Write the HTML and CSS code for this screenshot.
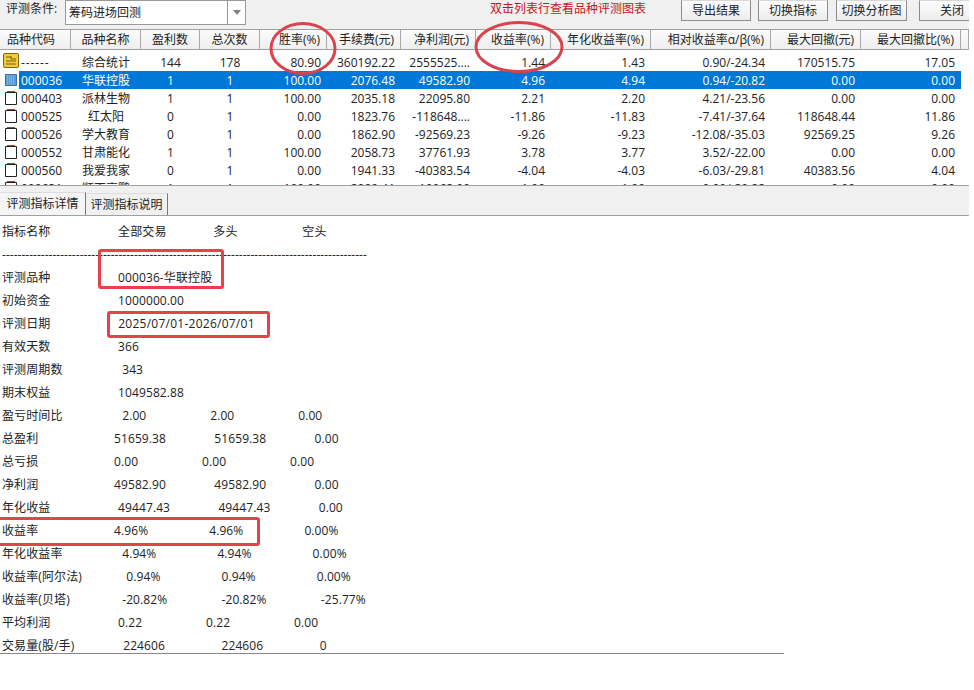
FILE: index.html
```html
<!DOCTYPE html>
<html>

<head>
  <title>评测结果</title>
  <meta charset="UTF-8">
  <link rel="stylesheet" href="styles.css">
</head>

<body>
  <div class="window">

    <div class="toolbar">
      <span class="cond_label">评测条件:</span>
      <div class="combo">
        <span class="combo_text">筹码进场回测</span>
        <span class="combo_btn"><svg width="8" height="5" viewBox="0 0 8 5"><path d="M0 0H8L4 5Z" fill="#808080"/></svg></span>
      </div>
      <span class="hint">双击列表行查看品种评测图表</span>
      <button class="btn">导出结果</button>
      <button class="btn btn_gap">切换指标</button>
      <button class="btn btn_wide">切换分析图</button>
      <button class="btn btn_close">关闭</button>
    </div>

    <div class="list">
      <div class="row head">
        <div class="code">品种代码</div><div class="name">品种名称</div><div class="mid">盈利数</div><div class="mid">总次数</div><div>胜率(%)</div><div>手续费(元)</div><div>净利润(元)</div><div>收益率(%)</div><div>年化收益率(%)</div><div>相对收益率α/β(%)</div><div>最大回撤(元)</div><div>最大回撤比(%)</div><div></div>
      </div>
      <div class="rows">
        <div class="row">
          <div class="code"><svg class="ico" width="16" height="16" viewBox="0 0 16 16"><rect x="0.5" y="0.5" width="15" height="14" rx="1.5" fill="#f2cc3a" stroke="#7d6410"/><path d="M3 4H8M8 3V6H13M3 8H13M3 11H13" fill="none" stroke="#7a5f10"/></svg><span class="dash_code">------</span></div>
          <div class="name">综合统计</div><div class="mid">144</div><div class="mid">178</div><div>80.90</div><div>360192.22</div><div>2555525....</div><div>1.44</div><div>1.43</div><div>0.90/-24.34</div><div>170515.75</div><div>17.05</div>
        </div>
        <div class="row selected">
          <div class="code"><svg class="ico" width="16" height="16" viewBox="0 0 16 16"><path d="M2.5 3.5H13.5V14.5H2.5Z" fill="#5b9bd5" stroke="#41719c"/><path d="M4 5H12M4 7H12M4 9H12M4 11H12M4 13H12" stroke="#a9cbea" stroke-dasharray="1 1"/></svg><span class="sel_text">000036</span></div>
          <div class="name sel_text">华联控股</div><div class="mid sel_text">1</div><div class="mid sel_text">1</div><div class="sel_text">100.00</div><div class="sel_text">2076.48</div><div class="sel_text">49582.90</div><div class="sel_text">4.96</div><div class="sel_text">4.94</div><div class="sel_text">0.94/-20.82</div><div class="sel_text">0.00</div><div class="sel_text">0.00</div>
        </div>
        <div class="row">
          <div class="code"><svg class="ico" width="16" height="16" viewBox="0 0 16 16"><path d="M2.5 3.5H13.5V15.5H2.5Z" fill="#fff" stroke="#222"/><path d="M4 2.5H12" stroke="#b04040"/></svg>000403</div>
          <div class="name">派林生物</div><div class="mid">1</div><div class="mid">1</div><div>100.00</div><div>2035.18</div><div>22095.80</div><div>2.21</div><div>2.20</div><div>4.21/-23.56</div><div>0.00</div><div>0.00</div>
        </div>
        <div class="row">
          <div class="code"><svg class="ico" width="16" height="16" viewBox="0 0 16 16"><path d="M2.5 3.5H13.5V15.5H2.5Z" fill="#fff" stroke="#222"/><path d="M4 2.5H12" stroke="#b04040"/></svg>000525</div>
          <div class="name">红太阳</div><div class="mid">0</div><div class="mid">1</div><div>0.00</div><div>1823.76</div><div>-118648....</div><div>-11.86</div><div>-11.83</div><div>-7.41/-37.64</div><div>118648.44</div><div>11.86</div>
        </div>
        <div class="row">
          <div class="code"><svg class="ico" width="16" height="16" viewBox="0 0 16 16"><path d="M2.5 3.5H13.5V15.5H2.5Z" fill="#fff" stroke="#222"/><path d="M4 2.5H12" stroke="#b04040"/></svg>000526</div>
          <div class="name">学大教育</div><div class="mid">0</div><div class="mid">1</div><div>0.00</div><div>1862.90</div><div>-92569.23</div><div>-9.26</div><div>-9.23</div><div>-12.08/-35.03</div><div>92569.25</div><div>9.26</div>
        </div>
        <div class="row">
          <div class="code"><svg class="ico" width="16" height="16" viewBox="0 0 16 16"><path d="M2.5 3.5H13.5V15.5H2.5Z" fill="#fff" stroke="#222"/><path d="M4 2.5H12" stroke="#b04040"/></svg>000552</div>
          <div class="name">甘肃能化</div><div class="mid">1</div><div class="mid">1</div><div>100.00</div><div>2058.73</div><div>37761.93</div><div>3.78</div><div>3.77</div><div>3.52/-22.00</div><div>0.00</div><div>0.00</div>
        </div>
        <div class="row">
          <div class="code"><svg class="ico" width="16" height="16" viewBox="0 0 16 16"><path d="M2.5 3.5H13.5V15.5H2.5Z" fill="#fff" stroke="#222"/><path d="M4 2.5H12" stroke="#b04040"/></svg>000560</div>
          <div class="name">我爱我家</div><div class="mid">0</div><div class="mid">1</div><div>0.00</div><div>1941.33</div><div>-40383.54</div><div>-4.04</div><div>-4.03</div><div>-6.03/-29.81</div><div>40383.56</div><div>4.04</div>
        </div>
        <div class="row">
          <div class="code"><svg class="ico" width="16" height="16" viewBox="0 0 16 16"><path d="M2.5 3.5H13.5V15.5H2.5Z" fill="#fff" stroke="#222"/><path d="M4 2.5H12" stroke="#b04040"/></svg>000631</div>
          <div class="name">顺灭高鹏</div><div class="mid">1</div><div class="mid">1</div><div>100.00</div><div>2000.41</div><div>10962.90</div><div>1.09</div><div>1.09</div><div>0.09/-20.82</div><div>0.00</div><div>0.00</div>
        </div>
      </div>
    </div>

    <div class="tabs">
      <div class="tab tab_on">评测指标详情</div>
      <div class="tab">评测指标说明</div>
    </div>

    <div class="detail">
      <div class="line head_line"><span>指标名称</span><span> 全部交易</span><span>   多头</span><span>   空头</span></div>
      <div class="line dashes">----------------------------------------------------------------------------------------------</div>
      <div class="line"><span>评测品种</span><span> 000036-华联控股</span></div>
      <div class="line"><span>初始资金</span><span> 1000000.00</span></div>
      <div class="line"><span>评测日期</span><span class="date"> 2025/07/01-2026/07/01</span></div>
      <div class="line"><span>有效天数</span><span> 366</span></div>
      <div class="line"><span>评测周期数</span><span>  343</span></div>
      <div class="line"><span>期末权益</span><span> 1049582.88</span></div>
      <div class="line"><span>盈亏时间比</span><span>  2.00</span><span>  2.00</span><span>  0.00</span></div>
      <div class="line"><span>总盈利</span><span>51659.38</span><span>   51659.38</span><span>      0.00</span></div>
      <div class="line"><span>总亏损</span><span>0.00</span><span>0.00</span><span>0.00</span></div>
      <div class="line"><span>净利润</span><span>49582.90</span><span>   49582.90</span><span>      0.00</span></div>
      <div class="line"><span>年化收益</span><span> 49447.43</span><span>    49447.43</span><span>       0.00</span></div>
      <div class="line pct"><span>收益率</span><span>4.96%</span><span>  4.96%</span><span>    0.00%</span></div>
      <div class="line pct"><span>年化收益率</span><span>  4.94%</span><span>    4.94%</span><span>      0.00%</span></div>
      <div class="line pct"><span>收益率(阿尔法)</span><span>   0.94%</span><span>     0.94%</span><span>       0.00%</span></div>
      <div class="line pct"><span>收益率(贝塔)</span><span>  -20.82%</span><span>     -20.82%</span><span>        -25.77%</span></div>
      <div class="line"><span>平均利润</span><span> 0.22</span><span> 0.22</span><span> 0.00</span></div>
      <div class="line vol"><span>交易量(股/手)</span><span>  224606</span><span>     224606</span><span>       0</span></div>
    </div>

    <svg class="marks" width="969" height="100" viewBox="0 0 969 100">
      <ellipse cx="303" cy="48.5" rx="32" ry="25" fill="none" stroke="#d9434b" stroke-width="3"/>
      <ellipse cx="519" cy="47" rx="43" ry="24.5" fill="none" stroke="#d9434b" stroke-width="3"/>
    </svg>
    <div class="box box_name"></div>
    <div class="box box_date"></div>
    <div class="box box_rate"></div>

  </div>
</body>

</html>
```

FILE: styles.css
```css
html,
body {
  margin: 0;
  padding: 0;
  background-color: white;
}

body {
  font-family: "Open Sans", "Noto Sans CJK SC", sans-serif;
  font-size: 12px;
  color: #222;
}

.window {
  position: relative;
  width: 969px;
  height: 690px;
  overflow: hidden;
}

.toolbar {
  height: 29px;
  display: flex;
  align-items: flex-start;
  background-color: #f0f0f0;
  box-sizing: border-box;
  padding-left: 6px;
  line-height: 18px;
}

.cond_label {
  width: 59px;
}

.combo {
  width: 181px;
  height: 25px;
  display: flex;
  background-color: white;
  border: 1px solid #999;
  box-sizing: border-box;
}

.combo_text {
  flex: 1;
  padding: 3px 0 0 3px;
}

.combo_btn {
  width: 17px;
  border-left: 1px solid #999;
  display: grid;
  place-content: center;
}

.combo_btn svg {
  display: block;
}

.hint {
  width: 191px;
  margin-left: 244px;
  color: #c8141c;
}

.btn {
  width: 70px;
  height: 21px;
  margin-right: 7px;
  padding: 0;
  font: inherit;
  color: #222;
  background: linear-gradient(#fdfdfd, #ececec);
  border: 1px solid #8c8c8c;
  border-top-color: #d8d8d8;
}

.btn_gap {
  margin-right: 8px;
}

.btn_wide {
  width: 71px;
  margin-right: 12px;
}

.btn_close {
  margin-right: 0;
  flex: 1;
  border-right: none;
  text-align: right;
  padding-right: 5px;
}

.list {
  height: 157px;
  overflow: hidden;
  border-bottom: 1px solid #a0a0a0;
  box-sizing: border-box;
  background-color: white;
}

.row {
  display: grid;
  grid-template-columns: 71px 70px 59px 60px 67px 74px 75px 75px 100px 120px 90px 100px 8px;
  height: 18px;
  line-height: 18px;
}

.row>div {
  text-align: right;
  padding-right: 6px;
  white-space: nowrap;
  box-sizing: border-box;
}

.row>.code {
  text-align: left;
  padding: 0 0 0 21px;
  position: relative;
}

.row>.name,
.row>.mid {
  text-align: center;
  padding: 0;
}

.dash_code {
  letter-spacing: 0.9px;
}

.ico {
  position: absolute;
  left: 3px;
  top: 0;
}

.head {
  height: 21px;
  line-height: 20px;
  background: linear-gradient(#fbfbfb, #efefef);
  border-top: 1px solid #a0a0a0;
  border-bottom: 1px solid #a0a0a0;
  box-sizing: border-box;
}

.head>div {
  border-right: 1px solid #a8a8a8;
}

.head>.code {
  padding-left: 7px;
}

.rows {
  height: 135px;
  padding-top: 3px;
  box-sizing: border-box;
  overflow: hidden;
}

.rows .row {
  line-height: 19px;
}

.selected {
  background: linear-gradient(to right, white 19px, #0078d7 19px, #0078d7 961px, white 961px);
}

.sel_text {
  color: white;
}

.tabs {
  height: 30px;
  display: flex;
  align-items: flex-end;
  background-color: #f0f0f0;
  border-bottom: 1px solid #a0a0a0;
  box-sizing: border-box;
}

.tab {
  width: 82px;
  height: 22px;
  line-height: 21px;
  text-align: center;
  box-sizing: border-box;
  background-color: #f0f0f0;
  border-right: 1px solid #777;
  border-top: 1px solid #ddd;
}

.tab_on {
  width: 86px;
  height: 23px;
  background-color: #f5f5f5;
}

.detail {
  padding: 4px 0 0 2px;
  height: 438px;
  box-sizing: border-box;
  border-bottom: 1px solid #888;
  width: 784px;
}

.line {
  display: grid;
  grid-template-columns: 112px 88px 88px auto;
  height: 23px;
  line-height: 23px;
  white-space: pre;
  word-spacing: 0.88px;
  letter-spacing: 0.1px;
}

.line.dashes {
  display: block;
  word-spacing: 0;
  letter-spacing: 0.02px;
}

.line .date {
  letter-spacing: 0.25px;
}

.head_line span:nth-child(3) {
  margin-left: -1px;
}

.pct span:nth-child(3) {
  margin-left: -1px;
}

.pct span:nth-child(4) {
  margin-left: -2px;
}

.vol span:nth-child(2) {
  margin-left: 1px;
}

.vol span:nth-child(3) {
  margin-left: -1px;
}

.vol span:nth-child(4) {
  margin-left: 1px;
}

/* red marks drawn by hand over the list and the details */
.marks {
  position: absolute;
  left: 0;
  top: 0;
}

.box {
  position: absolute;
  border: 3px solid #e8414a;
  border-radius: 3px;
  box-sizing: border-box;
}

.box_name {
  left: 98px;
  top: 249px;
  width: 126px;
  height: 40px;
}

.box_date {
  left: 107px;
  top: 311px;
  width: 163px;
  height: 27px;
}

.box_rate {
  left: -3px;
  top: 517px;
  width: 263px;
  height: 29px;
}
```
